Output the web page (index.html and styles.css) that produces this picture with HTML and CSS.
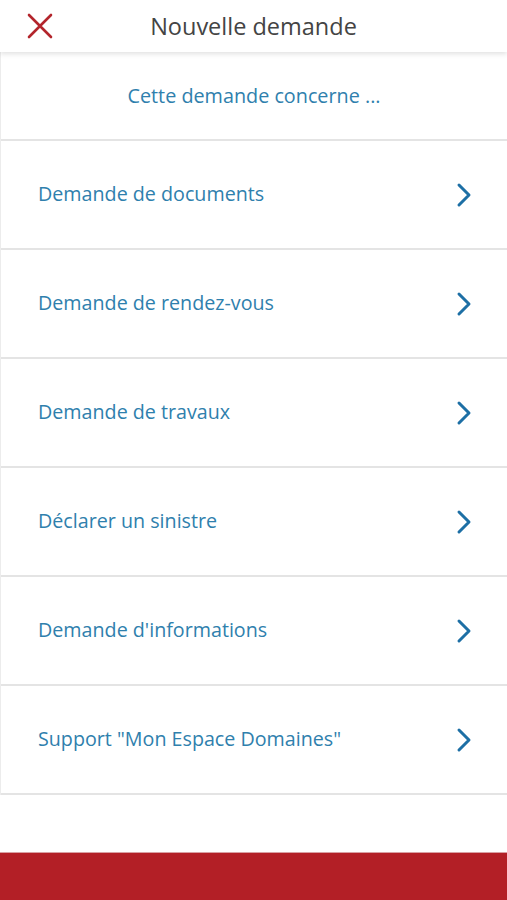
FILE: index.html
```html
<!DOCTYPE html>
<html lang="fr">
<head>
    <meta charset="UTF-8">
    <meta name="viewport" content="width=device-width, initial-scale=1.0">
    <title>Nouvelle demande</title>
    <link rel="stylesheet" href="styles.css">
</head>
<body>
    <header class="topbar">
        <button class="close-btn" aria-label="Fermer">
            <svg width="26" height="26" viewBox="0 0 26 26">
                <path d="M2 2 L24 24 M24 2 L2 24" stroke="#b3252c" stroke-width="2.6" stroke-linecap="round" fill="none"/>
            </svg>
        </button>
        <h1 class="title">Nouvelle demande</h1>
    </header>

    <div class="list">
        <div class="intro">Cette demande concerne ...</div>
        <a class="row" href="#"><span>Demande de documents</span><svg class="chev" width="16" height="26" viewBox="0 0 16 26"><path d="M3 3 L13 13 L3 23" stroke="#1d6fa5" stroke-width="3" stroke-linecap="round" stroke-linejoin="round" fill="none"/></svg></a>
        <a class="row" href="#"><span>Demande de rendez-vous</span><svg class="chev" width="16" height="26" viewBox="0 0 16 26"><path d="M3 3 L13 13 L3 23" stroke="#1d6fa5" stroke-width="3" stroke-linecap="round" stroke-linejoin="round" fill="none"/></svg></a>
        <a class="row" href="#"><span>Demande de travaux</span><svg class="chev" width="16" height="26" viewBox="0 0 16 26"><path d="M3 3 L13 13 L3 23" stroke="#1d6fa5" stroke-width="3" stroke-linecap="round" stroke-linejoin="round" fill="none"/></svg></a>
        <a class="row" href="#"><span>Déclarer un sinistre</span><svg class="chev" width="16" height="26" viewBox="0 0 16 26"><path d="M3 3 L13 13 L3 23" stroke="#1d6fa5" stroke-width="3" stroke-linecap="round" stroke-linejoin="round" fill="none"/></svg></a>
        <a class="row" href="#"><span>Demande d'informations</span><svg class="chev" width="16" height="26" viewBox="0 0 16 26"><path d="M3 3 L13 13 L3 23" stroke="#1d6fa5" stroke-width="3" stroke-linecap="round" stroke-linejoin="round" fill="none"/></svg></a>
        <a class="row" href="#"><span>Support "Mon Espace Domaines"</span><svg class="chev" width="16" height="26" viewBox="0 0 16 26"><path d="M3 3 L13 13 L3 23" stroke="#1d6fa5" stroke-width="3" stroke-linecap="round" stroke-linejoin="round" fill="none"/></svg></a>
    </div>

    <div class="bottom-bar"></div>
</body>
</html>
```

FILE: styles.css
```css
html, body {
    margin: 0;
    padding: 0;
    height: 100%;
}

body {
    font-family: "Open Sans", Arial, sans-serif;
    background-color: #ffffff;
    display: flex;
    flex-direction: column;
    overflow: hidden;
}

.topbar {
    height: 52px;
    display: flex;
    align-items: center;
    justify-content: center;
    position: relative;
    background: #fff;
    box-shadow: 0 2px 5px rgba(0, 0, 0, 0.12);
    z-index: 2;
}

.close-btn {
    position: absolute;
    left: 27px;
    top: 13px;
    padding: 0;
    border: none;
    background: none;
    cursor: pointer;
    line-height: 0;
}

.title {
    margin: 0;
    font-size: 23.5px;
    font-weight: normal;
    color: #444444;
}

.list {
    border-left: 1px solid #ececec;
}

.intro {
    height: 87px;
    display: flex;
    align-items: center;
    justify-content: center;
    font-size: 19.8px;
    color: #2f80ad;
    border-bottom: 2px solid #e4e4e4;
}

.row {
    height: 109px;
    box-sizing: border-box;
    display: flex;
    align-items: center;
    justify-content: space-between;
    padding: 0 35px 3px 37px;
    font-size: 19.7px;
    color: #2f80ad;
    text-decoration: none;
    border-bottom: 2px solid #e4e4e4;
}

.chev {
    display: block;
    margin-top: 3px;
}

.bottom-bar {
    margin-top: auto;
    height: 47px;
    background-color: #b31f26;
    border-top: 1px solid #d9a0a3;
}
```
